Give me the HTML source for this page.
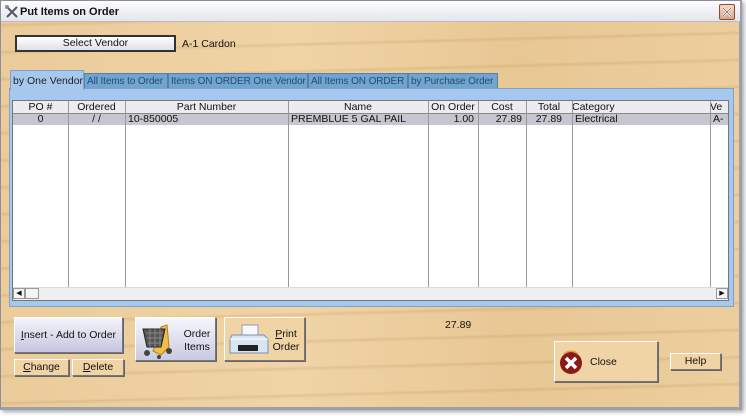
<!DOCTYPE html>
<html><head><meta charset="utf-8"><style>
*{box-sizing:border-box;margin:0;padding:0}
body{width:746px;height:416px;background:#fff;font-family:"Liberation Sans",Arial,sans-serif;font-size:10.5px;color:#111;position:relative;overflow:hidden}
.abs{position:absolute}
#win{left:0;top:0;width:742px;height:410px;border:1px solid #8a8f99;border-right:3px solid #9aa0aa;border-bottom:3px solid #9aa0aa;box-shadow:2px 2px 4px rgba(0,0,0,.35);
background:
repeating-linear-gradient(178.5deg,rgba(180,130,70,0) 0px,rgba(180,130,70,0) 22px,rgba(170,120,60,.18) 24px,rgba(180,130,70,0) 27px),
linear-gradient(90deg,#ebcb9a,#f0d4a6 40%,#e8c794 70%,#ecce9e)}
#title{left:0;top:0;width:739px;height:21px;background:linear-gradient(#fdfdfe,#e4e6ec);border-bottom:1px solid #b8bcc4;font-weight:bold;font-size:11px;padding:5px 0 0 19px}
.btn{position:absolute;border:1px solid #777;border-top-color:#fff;border-left-color:#fff;box-shadow:1px 1px 0 #666;text-align:center;white-space:nowrap}
.tab{position:absolute;top:72px;height:16px;background:#6ea5d3;color:#2a4a6a;padding:2px 0 0 2px;border:1px solid #5a7fa5;border-bottom:none;white-space:nowrap;overflow:hidden;font-size:10px;letter-spacing:-0.1px}
#panel{left:8px;top:87px;width:725px;height:219px;background:#a6c8ef;border:1px solid #7fa2c8}
#grid{left:11px;top:99px;width:717px;height:201px;background:#fff;border:1px solid #777}
.col{position:absolute;top:0;height:187px;border-left:1px solid #999}
.hd{position:absolute;top:0;height:13px;background:#ececf0;border-bottom:1px solid #888;text-align:center;font-size:10.5px;line-height:13px;white-space:nowrap}
.r{position:absolute;top:13px;height:11px;background:#c6c6ce;line-height:11px;font-size:10.5px;white-space:nowrap}
</style></head><body>
<div id="win" class="abs">
<div id="title" class="abs">Put Items on Order</div>
<svg class="abs" style="left:3px;top:3px" width="15" height="15" viewBox="0 0 15 15"><path d="M2 2 L13 13 M13 3 L3 13" stroke="#556" stroke-width="2"/><circle cx="3" cy="3" r="2" fill="#889"/></svg>
<div class="abs" style="left:718px;top:3px;width:16px;height:16px;background:linear-gradient(#f4d8c4,#d9a589);border:1px solid #8b4a3a;border-radius:2px"><svg width="14" height="14" viewBox="0 0 14 14"><path d="M3 3L11 11M11 3L3 11" stroke="#fff" stroke-width="2.2"/><path d="M3 3L11 11M11 3L3 11" stroke="#7a5a50" stroke-width=".8"/></svg></div>

<div class="btn" style="left:14px;top:34px;width:161px;height:17px;background:linear-gradient(#fff,#dfe0ea);border:2px solid #333;box-shadow:none;line-height:13px">Select Vendor</div>
<div class="abs" style="left:181px;top:37px">A-1 Cardon</div>

<div class="tab" style="left:83px;width:84px">All Items to Order</div>
<div class="tab" style="left:167px;width:140px">Items ON ORDER One Vendor</div>
<div class="tab" style="left:307px;width:100px">All Items ON ORDER</div>
<div class="tab" style="left:407px;width:90px">by Purchase Order</div>
<div id="panel" class="abs"></div>
<div class="abs" style="left:9px;top:69px;width:74px;height:20px;background:#a6c8ef;border:1px solid #7fa2c8;border-bottom:none;padding:4px 0 0 2px;color:#222;white-space:nowrap;font-size:10.5px">by One Vendor</div>

<div id="grid" class="abs">
<div class="hd" style="left:0;width:55px">PO #</div>
<div class="hd" style="left:55px;width:57px">Ordered</div>
<div class="hd" style="left:112px;width:163px">Part Number</div>
<div class="hd" style="left:275px;width:140px">Name</div>
<div class="hd" style="left:415px;width:50px">On Order</div>
<div class="hd" style="left:465px;width:48px">Cost</div>
<div class="hd" style="left:513px;width:46px">Total</div>
<div class="hd" style="left:559px;width:138px;text-align:left">Category</div>
<div class="hd" style="left:697px;width:18px;text-align:left;overflow:hidden">Ve</div>
<div class="r" style="left:0;width:715px"></div>
<div class="r" style="left:0;width:55px;text-align:center;background:none">0</div>
<div class="r" style="left:55px;width:57px;text-align:center;background:none">/ /</div>
<div class="r" style="left:115px;background:none">10-850005</div>
<div class="r" style="left:278px;background:none">PREMBLUE 5 GAL PAIL</div>
<div class="r" style="left:415px;width:46px;text-align:right;background:none">1.00</div>
<div class="r" style="left:465px;width:44px;text-align:right;background:none">27.89</div>
<div class="r" style="left:513px;width:36px;text-align:right;background:none">27.89</div>
<div class="r" style="left:562px;background:none">Electrical</div>
<div class="r" style="left:700px;background:none">A-</div>
<div class="col" style="left:55px"></div><div class="col" style="left:112px"></div><div class="col" style="left:275px"></div><div class="col" style="left:415px"></div><div class="col" style="left:465px"></div><div class="col" style="left:513px"></div><div class="col" style="left:559px"></div><div class="col" style="left:697px"></div>
<div class="abs" style="left:0;top:186px;width:715px;height:13px;background:#efeff2;border-top:1px solid #ddd"></div>
<div class="abs" style="left:0;top:187px;width:12px;height:11px;background:#f4f4f4;border:1px solid #999;font-size:7px;line-height:9px;text-align:center">◀</div>
<div class="abs" style="left:12px;top:187px;width:14px;height:11px;background:#f4f4f4;border:1px solid #999"></div>
<div class="abs" style="left:703px;top:187px;width:12px;height:11px;background:#f4f4f4;border:1px solid #999;font-size:7px;line-height:9px;text-align:center">▶</div>
</div>

<div class="btn" style="left:13px;top:316px;width:109px;height:36px;background:linear-gradient(#f4f4fa,#c5c6e0);line-height:34px"><u>I</u>nsert - Add to Order</div>
<div class="btn" style="left:13px;top:358px;width:55px;height:17px;background:#f0d4a6;line-height:15px"><u>C</u>hange</div>
<div class="btn" style="left:71px;top:358px;width:52px;height:17px;background:#f0d4a6;line-height:15px"><u>D</u>elete</div>

<div class="btn" style="left:134px;top:316px;width:81px;height:44px;background:linear-gradient(#f7f7fc,#c9cae2)">
<svg class="abs" style="left:3px;top:3px" width="36" height="38" viewBox="0 0 36 38"><path d="M22 6 L28 4 L30 26 L22 34 L14 30 Z" fill="#f0c040" stroke="#b08020"/><path d="M4 8 L26 8 L22 26 L8 26 Z" fill="#555" stroke="#222"/><path d="M7 12H24M8 17H23M9 22H22M11 8V26M16 8V26M21 8V26" stroke="#888" stroke-width="1"/><circle cx="8" cy="32" r="3" fill="#444"/><circle cx="30" cy="30" r="3" fill="#444"/><circle cx="20" cy="36" r="2" fill="#444"/></svg>
<div class="abs" style="left:44px;top:10px;width:34px;line-height:13px;text-align:center">Order<br>Items</div></div>

<div class="btn" style="left:223px;top:316px;width:81px;height:44px;background:#f0d4a6">
<svg class="abs" style="left:3px;top:5px" width="42" height="34" viewBox="0 0 42 34"><path d="M14 2H30V12H14Z" fill="#f8f8ff" stroke="#99a"/><path d="M4 12H36L40 16V30H2V16Z" fill="#d7e6f4" stroke="#7a90aa"/><path d="M10 22H30V28H10Z" fill="#222"/><path d="M2 16H40" stroke="#fff"/></svg>
<div class="abs" style="left:44px;top:10px;width:34px;line-height:13px;text-align:center"><u>P</u>rint<br>Order</div></div>

<div class="abs" style="left:444px;top:318px">27.89</div>

<div class="btn" style="left:553px;top:340px;width:104px;height:41px;background:#f0d4a6">
<svg class="abs" style="left:3px;top:7px" width="26" height="26" viewBox="0 0 26 26"><circle cx="13" cy="14" r="11" fill="#8a1a1a"/><path d="M6 5 A10 10 0 0 1 20 5" stroke="#e0a040" fill="none" stroke-width="1.5"/><path d="M8 9L18 19M18 9L8 19" stroke="#fff" stroke-width="3.5"/></svg>
<div class="abs" style="left:35px;top:14px">Close</div></div>
<div class="btn" style="left:669px;top:352px;width:51px;height:17px;background:#f0d4a6;line-height:15px">Help</div>
</div>
</body></html>
